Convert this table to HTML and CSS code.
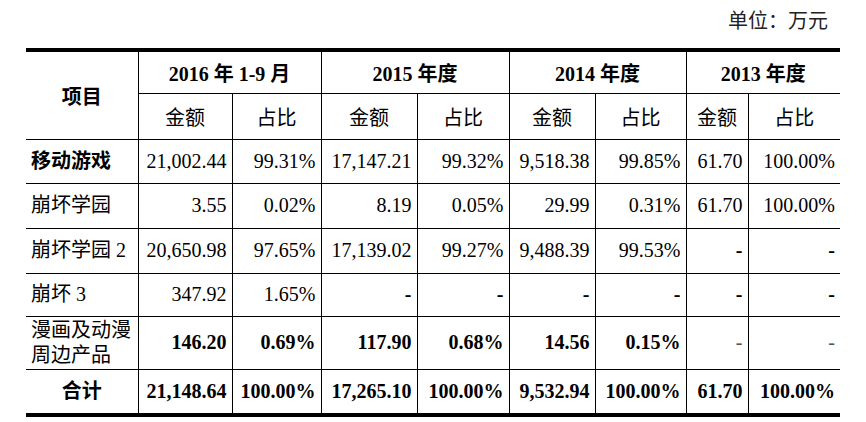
FILE: index.html
```html
<!DOCTYPE html>
<html lang="zh">
<head>
<meta charset="utf-8">
<link rel="stylesheet" href="styles.css">
</head>
<body>
<div class="page">
  <div class="unit">单位：万元</div>
  <table class="data">
    <colgroup>
      <col class="c-item"><col class="c1a"><col class="c1b"><col class="c2a"><col class="c2b"><col class="c3a"><col class="c3b"><col class="c4a"><col class="c4b">
    </colgroup>
    <thead>
      <tr class="h1">
        <th rowspan="2" class="item-head">项目</th>
        <th colspan="2">2016 年 1-9 月</th>
        <th colspan="2">2015 年度</th>
        <th colspan="2">2014 年度</th>
        <th colspan="2">2013 年度</th>
      </tr>
      <tr class="h2">
        <th class="sub">金额</th><th class="sub">占比</th>
        <th class="sub">金额</th><th class="sub">占比</th>
        <th class="sub">金额</th><th class="sub">占比</th>
        <th class="sub">金额</th><th class="sub">占比</th>
      </tr>
    </thead>
    <tbody>
      <tr class="r1">
        <td class="label bold">移动游戏</td>
        <td>21,002.44</td><td>99.31%</td><td>17,147.21</td><td>99.32%</td><td>9,518.38</td><td>99.85%</td><td>61.70</td><td>100.00%</td>
      </tr>
      <tr class="r2">
        <td class="label">崩坏学园</td>
        <td>3.55</td><td>0.02%</td><td>8.19</td><td>0.05%</td><td>29.99</td><td>0.31%</td><td>61.70</td><td>100.00%</td>
      </tr>
      <tr class="r3">
        <td class="label">崩坏学园 2</td>
        <td>20,650.98</td><td>97.65%</td><td>17,139.02</td><td>99.27%</td><td>9,488.39</td><td>99.53%</td><td class="bold">-</td><td class="bold">-</td>
      </tr>
      <tr class="r4">
        <td class="label">崩坏 3</td>
        <td>347.92</td><td>1.65%</td><td class="bold">-</td><td class="bold">-</td><td class="bold">-</td><td class="bold">-</td><td class="bold">-</td><td class="bold">-</td>
      </tr>
      <tr class="r5">
        <td class="label">漫画及动漫<br>周边产品</td>
        <td class="bold">146.20</td><td class="bold">0.69%</td><td class="bold">117.90</td><td class="bold">0.68%</td><td class="bold">14.56</td><td class="bold">0.15%</td><td class="light">-</td><td class="light">-</td>
      </tr>
      <tr class="r6 total">
        <td class="label center">合计</td>
        <td>21,148.64</td><td>100.00%</td><td>17,265.10</td><td>100.00%</td><td>9,532.94</td><td>100.00%</td><td>61.70</td><td>100.00%</td>
      </tr>
    </tbody>
  </table>
</div>
</body>
</html>
```

FILE: styles.css
```css
html, body {
  margin: 0;
  padding: 0;
  background: #ffffff;
}

body {
  font-family: "Liberation Serif", "Noto Sans CJK SC", serif;
  color: #000000;
  font-size: 20px;
}

.page {
  width: 866px;
  height: 422px;
  padding-top: 8px;
  box-sizing: border-box;
}

.unit {
  text-align: right;
  padding-right: 38px;
  height: 40px;
  line-height: 26px;
  color: #222222;
}

.data {
  margin-left: 26px;
  width: 814px;
  table-layout: fixed;
  border-collapse: collapse;
  border-top: 4px solid #000000;
  border-bottom: 4px solid #000000;
}

.c-item { width: 112px; }
.c1a { width: 94px; }
.c1b { width: 89px; }
.c2a { width: 96px; }
.c2b { width: 92px; }
.c3a { width: 86px; }
.c3b { width: 91px; }
.c4a { width: 62px; }
.c4b { width: 92px; }

.data th,
.data td {
  border: 1px solid #000000;
  padding: 0 5px 0 5px;
  white-space: nowrap;
  overflow: visible;
}

.data tr > :first-child { border-left: none; }
.data tr > :last-child { border-right: none; }
.data .h2 > :last-child { border-right: none; }
.data .h2 > :first-child { border-left: 1px solid #000000; }

.data th {
  font-weight: bold;
  text-align: center;
}

.data th.sub {
  font-weight: normal;
}

.h1 { height: 43px; }
.h2 { height: 46px; }
.r1 { height: 44px; }
.r2 { height: 45px; }
.r3 { height: 45px; }
.r4 { height: 43px; }
.r5 { height: 53px; }
.r6 { height: 46px; }

.data td {
  text-align: right;
}

.data td.label {
  text-align: left;
  padding-left: 5px;
  line-height: 25px;
}

.data td.center {
  text-align: center;
}

.bold { font-weight: bold; }

.total td { font-weight: bold; }

.light {
  color: #555555;
}
```
